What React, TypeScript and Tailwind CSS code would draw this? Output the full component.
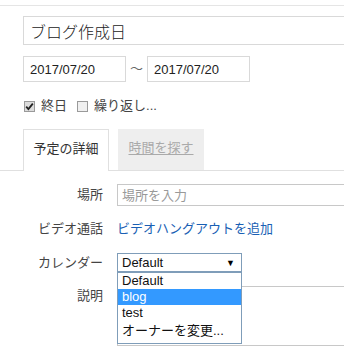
import React from 'react';

const font = { fontFamily: '"Liberation Sans", "Noto Sans CJK JP", sans-serif' };

const Checkbox: React.FC<{ checked?: boolean; label: string }> = ({ checked = false, label }) => (
  <label className="flex h-[14px] items-center gap-[6px] text-[13px] leading-[14px] text-[#444]">
    <span
      className={`flex h-[11px] w-[11px] items-center justify-center border border-[#9a9a9a] ${
        checked ? 'bg-[#dcdcdc]' : 'bg-[#f0f0f0]'
      }`}
    >
      {checked && (
        <svg width="9" height="9" viewBox="0 0 9 9">
          <path d="M1.2 4.6 L3.4 7 L7.8 1.6" fill="none" stroke="#222" strokeWidth="1.8" />
        </svg>
      )}
    </span>
    {label}
  </label>
);

const options = ['Default', 'blog', 'test', 'オーナーを変更...'];

export default function App() {
  return (
    <div className="h-[358px] w-[344px] overflow-hidden bg-white pt-[5px]" style={font}>
      <div className="border-t border-[#e5e5e5]">
        {/* Title + dates */}
        <div className="pl-[23px] pt-[10px]">
          <input
            readOnly
            value="ブログ作成日"
            className="block h-[29px] w-[340px] border border-[#d9d9d9] px-[6px] text-[16px] font-light text-[#222] outline-none"
          />
          <div className="mt-[11px] flex h-[26px] items-center">
            <input
              readOnly
              value="2017/07/20"
              className="h-[26px] w-[103px] border border-[#d9d9d9] px-[6px] text-[13px] text-[#222] outline-none"
            />
            <span className="w-[21px] text-center text-[13px] leading-[26px] text-[#666]">～</span>
            <input
              readOnly
              value="2017/07/20"
              className="h-[26px] w-[103px] border border-[#d9d9d9] px-[6px] text-[13px] text-[#222] outline-none"
            />
          </div>
          <div className="mt-[17px] flex h-[14px] items-center gap-[10px] pl-[1px]">
            <Checkbox checked label="終日" />
            <Checkbox label="繰り返し..." />
          </div>
        </div>

        {/* Tabs */}
        <div className="mt-[17px] flex h-[41px] items-end gap-[9px] border-b border-[#e0e0e0] pl-[23px]">
          <div className="-mb-px flex h-[42px] w-[86px] items-start justify-center border border-b-0 border-[#e0e0e0] bg-white pt-[10px] text-[13px] leading-[18px] text-[#333]">
            予定の詳細
          </div>
          <div className="flex h-[41px] w-[86px] items-start justify-center bg-[#eeeeee] pt-[10px] text-[13px] leading-[18px] text-[#aaa] underline underline-offset-2">
            時間を探す
          </div>
        </div>

        {/* Form */}
        <div className="grid grid-cols-[103px_1fr] gap-x-[14px] pt-[13px] text-[13px] leading-[18px]">
          <div className="flex h-[22px] items-center justify-end text-[#444]">場所</div>
          <input
            readOnly
            placeholder="場所を入力"
            className="h-[22px] w-[260px] border border-[#c8c8c8] px-[4px] text-[13px] outline-none placeholder:text-[#999]"
          />

          <div className="mt-[13px] flex h-[20px] items-center justify-end text-[#444]">ビデオ通話</div>
          <div className="mt-[13px] flex h-[20px] items-center text-[#1a5fb4]">ビデオハングアウトを追加</div>

          <div className="mt-[14px] flex h-[19px] items-center justify-end text-[#444]">カレンダー</div>
          <div className="relative mt-[14px] h-[19px] w-[125px]">
            <div className="flex h-[19px] items-center justify-between border border-[#7f9db9] bg-white pl-[4px] pr-[6px] text-[13px] text-[#111]">
              <span>Default</span>
              <span className="text-[9px] text-black">▼</span>
            </div>
            <div className="absolute left-0 top-full z-10 w-[125px] border border-[#7f9db9] bg-white pb-[3px] text-[13px] text-[#111]">
              {options.map((o) => (
                <div
                  key={o}
                  className={`flex items-center pl-[4px] ${o === 'blog' ? 'bg-[#3399ff] text-white' : ''} ${
                    o.startsWith('オ') ? 'h-[19px]' : 'h-[16px]'
                  }`}
                >
                  {o}
                </div>
              ))}
            </div>
          </div>

          <div className="mt-[14px] flex h-[20px] items-start justify-end pt-[1px] text-[#444]">説明</div>
          <div className="mt-[14px] h-[60px] w-[260px] border border-[#c8c8c8]" />
        </div>
      </div>
    </div>
  );
}
